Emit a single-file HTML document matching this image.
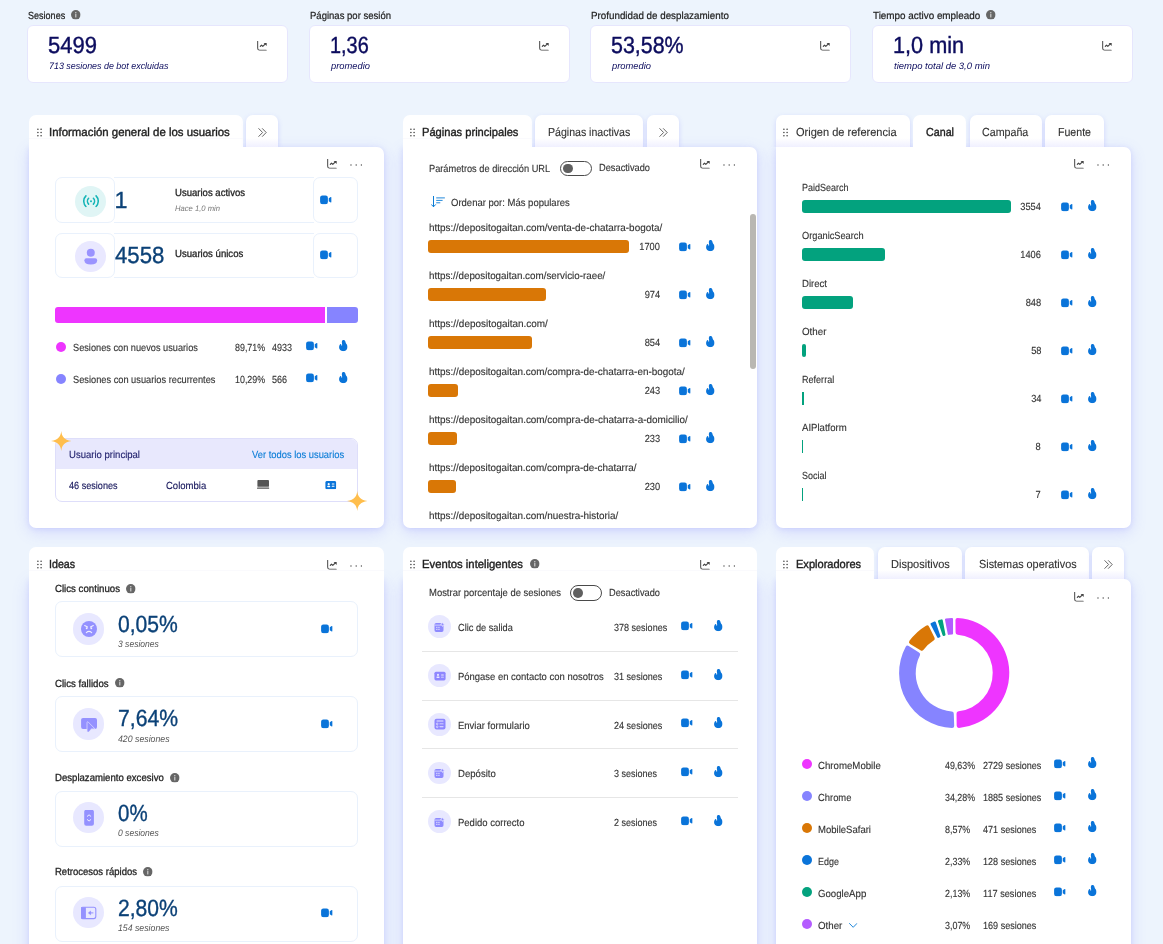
<!DOCTYPE html>
<html><head><meta charset="utf-8"><title>Dashboard</title>
<style>
html,body{margin:0;padding:0}
body{width:1163px;height:944px;overflow:hidden;background:#edf4fd;font-family:"Liberation Sans",sans-serif;position:relative}
#r{position:absolute;left:0;top:0;width:1163px;height:944px;overflow:hidden;will-change:transform}
.t{position:absolute;white-space:nowrap;text-rendering:geometricPrecision}
.b{position:absolute}
.i{position:absolute;overflow:visible}
</style></head><body>

<svg width="0" height="0" style="position:absolute"><defs>
<symbol id="cam" viewBox="0 0 11.6 9.6"><rect x="0.1" y="0.4" width="7.8" height="8.8" rx="2.3" fill="#0a74d9"/><path d="M8.75,3.3 L10.7,2.1 Q11.6,1.7 11.6,2.8 V6.8 Q11.6,7.9 10.7,7.5 L8.75,6.3 Z" fill="#0a74d9"/></symbol>
<symbol id="flame" viewBox="0 0 8.6 11.2"><path d="M4.7,0 C5.7,0.1 6.3,0.9 6.5,1.9 C6.8,3.2 7.6,3.9 8.1,5.0 C8.8,6.5 8.7,8.3 7.7,9.6 C6.9,10.6 5.8,11.2 4.4,11.2 C2.9,11.2 1.6,10.6 0.8,9.5 C-0.1,8.2 -0.1,6.6 0.5,5.3 C0.8,4.6 1.1,4.2 1.5,4.0 C1.9,3.8 2.2,4.1 2.25,4.6 C2.3,5.1 2.5,5.6 2.9,5.9 C3.3,5.0 3.1,3.8 2.9,2.9 C2.7,1.6 3.2,0.5 4.0,0.1 C4.2,0 4.5,0 4.7,0 Z" fill="#0a74d9"/></symbol>
<symbol id="chart" viewBox="0 0 10.4 9.8"><path d="M0.65,0.2 V7.3 A1.9,1.9 0 0 0 2.55,9.2 H9.2" fill="none" stroke="#555" stroke-width="1.1" stroke-linecap="round"/><path d="M3.3,5.3 L4.4,4.2 L5.8,5.3 L8.4,2.8" fill="none" stroke="#444" stroke-width="1.15" stroke-linecap="round" stroke-linejoin="round"/><path d="M6.6,1.9 H9.7 V5.0 Z" fill="#444"/></symbol>
<symbol id="dots" viewBox="0 0 12.4 2"><circle cx="1" cy="1" r="0.72" fill="#555"/><circle cx="6.2" cy="1" r="0.72" fill="#555"/><circle cx="11.4" cy="1" r="0.72" fill="#555"/></symbol>
<symbol id="grip" viewBox="0 0 5 9"><g fill="#444"><circle cx="0.9" cy="1.2" r="0.8"/><circle cx="4.1" cy="1.2" r="0.8"/><circle cx="0.9" cy="4.5" r="0.8"/><circle cx="4.1" cy="4.5" r="0.8"/><circle cx="0.9" cy="7.8" r="0.8"/><circle cx="4.1" cy="7.8" r="0.8"/></g></symbol>
<symbol id="info" viewBox="0 0 9.6 9.6"><circle cx="4.8" cy="4.8" r="4.8" fill="#666"/><rect x="4.25" y="4.1" width="1.1" height="3.3" rx="0.5" fill="#d8d8d8"/><circle cx="4.8" cy="2.7" r="0.7" fill="#d8d8d8"/></symbol>
<symbol id="chev2" viewBox="0 0 9 9"><path d="M0.8,0.6 L4.6,4.5 L0.8,8.4 M4.4,0.6 L8.2,4.5 L4.4,8.4" fill="none" stroke="#555" stroke-width="0.9" stroke-linecap="round" stroke-linejoin="round"/></symbol>
<symbol id="sort" viewBox="0 0 14 11.4"><path d="M2.5,0.3 V10.6 M0.5,8.7 L2.5,10.8 L4.5,8.7" fill="none" stroke="#0a7cd6" stroke-width="1" stroke-linecap="round" stroke-linejoin="round"/><path d="M5.6,1.9 H13.5 M5.6,4.4 H11.2 M5.6,6.8 H8.9" fill="none" stroke="#0a7cd6" stroke-width="0.9" stroke-linecap="round"/></symbol>
<symbol id="live" viewBox="0 0 16 12.4"><g fill="none" stroke="#16b5b7" stroke-width="1.55" stroke-linecap="round"><path d="M2.9,0.9 A7.6,7.6 0 0 0 2.9,11.5"/><path d="M13.1,0.9 A7.6,7.6 0 0 1 13.1,11.5"/><path d="M5.6,3.3 A4.2,4.2 0 0 0 5.6,9.1"/><path d="M10.4,3.3 A4.2,4.2 0 0 1 10.4,9.1"/></g><circle cx="8" cy="6.2" r="1" fill="#16b5b7"/></symbol>
<symbol id="person" viewBox="0 0 13.6 17"><circle cx="6.8" cy="4.7" r="4" fill="#9a93ff"/><path d="M2.4,10.3 H11.2 Q13.2,10.3 13.2,12.2 Q13.2,16.6 6.8,16.6 Q0.4,16.6 0.4,12.2 Q0.4,10.3 2.4,10.3 Z" fill="#9a93ff"/></symbol>
<symbol id="laptop" viewBox="0 0 12.4 9"><rect x="0.4" y="0" width="11.6" height="6.8" rx="0.9" fill="#555"/><rect x="0" y="7.6" width="12.4" height="1.2" rx="0.6" fill="#555"/></symbol>
<symbol id="idcard" viewBox="0 0 10.8 8"><rect x="0" y="0" width="10.8" height="8" rx="1.5" fill="#0a74d9"/><circle cx="3.4" cy="3.1" r="1.05" fill="#fff"/><rect x="1.9" y="4.7" width="3" height="1.3" rx="0.6" fill="#fff"/><rect x="6.3" y="2.5" width="2.8" height="0.9" rx="0.4" fill="#fff"/><rect x="6.3" y="4.6" width="2.8" height="0.9" rx="0.4" fill="#fff"/></symbol>
<symbol id="spark" viewBox="0 0 20 20"><path d="M10,0 C10.6,5.6 12.6,8.6 20,10 C12.6,11.4 10.6,14.4 10,20 C9.4,14.4 7.4,11.4 0,10 C7.4,8.6 9.4,5.6 10,0 Z" fill="#ffbe4d"/></symbol>
<symbol id="chevd" viewBox="0 0 8.4 5"><path d="M0.5,0.5 L4.2,4.3 L7.9,0.5" fill="none" stroke="#0a7cd6" stroke-width="0.9" stroke-linecap="round" stroke-linejoin="round"/></symbol>
<symbol id="angry" viewBox="0 0 16 16"><circle cx="8" cy="8" r="8" fill="#9491ff"/><g fill="none" stroke="#efeeff" stroke-width="1.1" stroke-linecap="round"><path d="M3.7,4.6 L6.5,6.1 M12.3,4.6 L9.5,6.1"/><path d="M5.3,11.6 Q8,9.2 10.7,11.6"/></g><circle cx="5.7" cy="7.3" r="0.95" fill="#efeeff"/><circle cx="10.3" cy="7.3" r="0.95" fill="#efeeff"/></symbol>
<symbol id="dead" viewBox="0 0 16 16"><rect x="0.1" y="1.9" width="15.9" height="11.1" rx="1.9" fill="#9491ff"/><path d="M6.0,6.6 Q6.0,5.2 7.2,6.0 L14.0,12.9 H10.2 L8.1,15.6 Q7.2,16.3 6.0,15.6 Z" fill="#9491ff" stroke="#d9d7ff" stroke-width="0.8" stroke-linejoin="round"/><rect x="5.4" y="13.1" width="4.2" height="3.4" fill="#e8e8ff"/><path d="M6.4,13.0 H9.9 L8.0,15.5 Q7.2,16.1 6.4,15.5 Z" fill="#9491ff"/></symbol>
<symbol id="scroll" viewBox="0 0 16 16"><rect x="3.2" y="-0.2" width="9.7" height="16" rx="2" fill="#9491ff"/><path d="M6.3,6.3 L8.05,4.8 L9.8,6.3 M6.3,9.6 L8.05,11.1 L9.8,9.6" fill="none" stroke="#efeeff" stroke-width="1" stroke-linecap="round" stroke-linejoin="round"/></symbol>
<symbol id="back" viewBox="0 0 16 16"><rect x="-0.2" y="2.2" width="15.0" height="11.4" rx="2" fill="#e8e8ff" stroke="#9491ff" stroke-width="1.1"/><path d="M1.8,2.2 H4.9 V13.6 H1.8 Q-0.2,13.6 -0.2,11.6 V4.2 Q-0.2,2.2 1.8,2.2 Z" fill="#9491ff"/><path d="M12.0,7.9 H9.0" fill="none" stroke="#9491ff" stroke-width="1" stroke-linecap="round"/><path d="M9.6,6.0 L7.3,7.9 L9.6,9.8 Z" fill="#8f8bff" stroke="#8f8bff" stroke-width="0.5" stroke-linejoin="round"/></symbol>
<symbol id="evcal" viewBox="0 0 12 12"><path d="M2.2,1.9 H7.2 Q7.7,3.7 9.5,4.2 V9.2 Q9.5,10.9 7.8,10.9 H2.2 Q0.5,10.9 0.5,9.2 V3.6 Q0.5,1.9 2.2,1.9 Z" fill="#8e8aff"/><rect x="0.5" y="3.7" width="9" height="0.75" fill="#e8e8ff"/><g fill="#efeeff"><rect x="2.3" y="5.8" width="1.1" height="1.1"/><rect x="4.4" y="5.8" width="1.1" height="1.1"/><rect x="2.3" y="7.8" width="1.1" height="1.1"/><rect x="4.4" y="7.8" width="1.1" height="1.1"/></g><path d="M8.6,0.9 C8.8,2.5 9.3,3.0 10.9,3.3 C9.3,3.6 8.8,4.1 8.6,5.7 C8.4,4.1 7.9,3.6 6.3,3.3 C7.9,3.0 8.4,2.5 8.6,0.9 Z" fill="#8e8aff" stroke="#e8e8ff" stroke-width="0.5"/></symbol>
<symbol id="evcard" viewBox="0 0 12 12"><rect x="0.4" y="1.7" width="11.2" height="8.7" rx="1.6" fill="#8e86ff"/><circle cx="4" cy="4.9" r="1.05" fill="#e9e8ff"/><rect x="2.4" y="6.6" width="3.2" height="1.4" rx="0.7" fill="#e9e8ff"/><rect x="7" y="4.5" width="2.9" height="0.9" rx="0.4" fill="#e9e8ff"/><rect x="7" y="6.7" width="2.9" height="0.9" rx="0.4" fill="#e9e8ff"/></symbol>
<symbol id="evform" viewBox="0 0 12 12"><rect x="0.5" y="0.7" width="11" height="10.8" rx="2" fill="#8e86ff"/><rect x="2.4" y="2.5" width="7.2" height="0.9" rx="0.4" fill="#e9e8ff"/><circle cx="3.2" cy="5.9" r="0.85" fill="none" stroke="#e9e8ff" stroke-width="0.7"/><circle cx="3.2" cy="8.8" r="0.85" fill="none" stroke="#e9e8ff" stroke-width="0.7"/><rect x="5.4" y="5.45" width="4.2" height="0.9" rx="0.4" fill="#e9e8ff"/><rect x="5.4" y="8.35" width="4.2" height="0.9" rx="0.4" fill="#e9e8ff"/></symbol>
</defs></svg>
<div id="r">
<div class="b" style="left:27.00px;top:25.00px;width:261.00px;height:58.00px;background:#fff;border:1px solid #e6e6fd;border-radius:6px;box-sizing:border-box;"></div>
<div class="t" style="font-size:10.30px;line-height:11px;height:11px;top:11px;color:#1c1c1c;-webkit-text-stroke:0.20px #1c1c1c;left:27.60px;transform-origin:0 50%;transform:scaleX(0.8779);">Sesiones</div>
<svg class="i" style="left:71.20px;top:10.20px" width="9.60" height="9.60" viewBox="0 0 9.6 9.6"><use href="#info"/></svg>
<div class="t" style="font-size:23.40px;line-height:26px;height:26px;top:32px;color:#0c0c5e;-webkit-text-stroke:0.40px #0c0c5e;left:48.30px;transform-origin:0 50%;transform:scaleX(0.9413);">5499</div>
<div class="t" style="font-size:9.40px;line-height:11px;height:11px;top:60px;color:#0c0c5e;font-style:italic;left:48.50px;transform-origin:0 50%;transform:scaleX(0.9504);">713 sesiones de bot excluidas</div>
<svg class="i" style="left:257.00px;top:41.10px" width="10.40" height="9.80" viewBox="0 0 10.4 9.8"><use href="#chart"/></svg>
<div class="b" style="left:309.00px;top:25.00px;width:261.00px;height:58.00px;background:#fff;border:1px solid #e6e6fd;border-radius:6px;box-sizing:border-box;"></div>
<div class="t" style="font-size:10.30px;line-height:11px;height:11px;top:11px;color:#1c1c1c;-webkit-text-stroke:0.20px #1c1c1c;left:309.60px;transform-origin:0 50%;transform:scaleX(0.9246);">Páginas por sesión</div>
<div class="t" style="font-size:23.40px;line-height:26px;height:26px;top:32px;color:#0c0c5e;-webkit-text-stroke:0.40px #0c0c5e;left:330.30px;transform-origin:0 50%;transform:scaleX(0.8497);">1,36</div>
<div class="t" style="font-size:9.40px;line-height:11px;height:11px;top:60px;color:#0c0c5e;font-style:italic;left:330.50px;transform-origin:0 50%;transform:scaleX(0.9977);">promedio</div>
<svg class="i" style="left:539.00px;top:41.10px" width="10.40" height="9.80" viewBox="0 0 10.4 9.8"><use href="#chart"/></svg>
<div class="b" style="left:590.00px;top:25.00px;width:261.00px;height:58.00px;background:#fff;border:1px solid #e6e6fd;border-radius:6px;box-sizing:border-box;"></div>
<div class="t" style="font-size:10.30px;line-height:11px;height:11px;top:11px;color:#1c1c1c;-webkit-text-stroke:0.20px #1c1c1c;left:590.60px;transform-origin:0 50%;transform:scaleX(0.9518);">Profundidad de desplazamiento</div>
<div class="t" style="font-size:23.40px;line-height:26px;height:26px;top:32px;color:#0c0c5e;-webkit-text-stroke:0.40px #0c0c5e;left:611.30px;transform-origin:0 50%;transform:scaleX(0.9160);">53,58%</div>
<div class="t" style="font-size:9.40px;line-height:11px;height:11px;top:60px;color:#0c0c5e;font-style:italic;left:611.50px;transform-origin:0 50%;transform:scaleX(0.9977);">promedio</div>
<svg class="i" style="left:820.00px;top:41.10px" width="10.40" height="9.80" viewBox="0 0 10.4 9.8"><use href="#chart"/></svg>
<div class="b" style="left:872.00px;top:25.00px;width:261.00px;height:58.00px;background:#fff;border:1px solid #e6e6fd;border-radius:6px;box-sizing:border-box;"></div>
<div class="t" style="font-size:10.30px;line-height:11px;height:11px;top:11px;color:#1c1c1c;-webkit-text-stroke:0.20px #1c1c1c;left:872.60px;transform-origin:0 50%;transform:scaleX(0.9595);">Tiempo activo empleado</div>
<svg class="i" style="left:986.30px;top:10.20px" width="9.60" height="9.60" viewBox="0 0 9.6 9.6"><use href="#info"/></svg>
<div class="t" style="font-size:23.40px;line-height:26px;height:26px;top:32px;color:#0c0c5e;-webkit-text-stroke:0.40px #0c0c5e;left:893.30px;transform-origin:0 50%;transform:scaleX(0.9278);">1,0 min</div>
<div class="t" style="font-size:9.40px;line-height:11px;height:11px;top:60px;color:#0c0c5e;font-style:italic;left:893.50px;transform-origin:0 50%;transform:scaleX(1.0116);">tiempo total de 3,0 min</div>
<svg class="i" style="left:1102.00px;top:41.10px" width="10.40" height="9.80" viewBox="0 0 10.4 9.8"><use href="#chart"/></svg>
<div class="b" style="left:29.00px;top:147.00px;width:355.00px;height:380.60px;background:#fff;border-radius:0 7px 7px 7px;box-shadow:0 1px 5px rgba(110,110,255,0.17),0 4px 16px rgba(110,110,255,0.20);"></div>
<div class="b" style="left:403.00px;top:147.00px;width:353.80px;height:380.60px;background:#fff;border-radius:0 7px 7px 7px;box-shadow:0 1px 5px rgba(110,110,255,0.17),0 4px 16px rgba(110,110,255,0.20);"></div>
<div class="b" style="left:776.00px;top:147.00px;width:355.00px;height:380.60px;background:#fff;border-radius:0 7px 7px 7px;box-shadow:0 1px 5px rgba(110,110,255,0.17),0 4px 16px rgba(110,110,255,0.20);"></div>
<div class="b" style="left:29.00px;top:579.00px;width:355.00px;height:381.00px;background:#fff;border-radius:0;box-shadow:0 1px 5px rgba(110,110,255,0.17),0 4px 16px rgba(110,110,255,0.20);"></div>
<div class="b" style="left:403.00px;top:579.00px;width:353.80px;height:381.00px;background:#fff;border-radius:0;box-shadow:0 1px 5px rgba(110,110,255,0.17),0 4px 16px rgba(110,110,255,0.20);"></div>
<div class="b" style="left:776.00px;top:579.00px;width:355.00px;height:381.00px;background:#fff;border-radius:0 7px 0 0;box-shadow:0 1px 5px rgba(110,110,255,0.17),0 4px 16px rgba(110,110,255,0.20);"></div>
<div class="b" style="left:29.00px;top:115.00px;width:214.00px;height:34.00px;background:#fff;border-radius:7px 7px 0 0;"></div>
<div class="b" style="left:246.00px;top:115.00px;width:32.00px;height:32.00px;background:linear-gradient(#fff 72%,#f0f0ff);border-radius:7px 7px 0 0;box-shadow:0 2px 5px rgba(120,120,255,0.25);clip-path:inset(-8px -8px 0 -8px);"></div>
<div class="b" style="left:403.00px;top:115.00px;width:128.60px;height:34.00px;background:#fff;border-radius:7px 7px 0 0;"></div>
<div class="b" style="left:535.30px;top:115.00px;width:107.70px;height:32.00px;background:linear-gradient(#fff 72%,#f0f0ff);border-radius:7px 7px 0 0;box-shadow:0 2px 5px rgba(120,120,255,0.25);clip-path:inset(-8px -8px 0 -8px);"></div>
<div class="b" style="left:647.00px;top:115.00px;width:32.00px;height:32.00px;background:linear-gradient(#fff 72%,#f0f0ff);border-radius:7px 7px 0 0;box-shadow:0 2px 5px rgba(120,120,255,0.25);clip-path:inset(-8px -8px 0 -8px);"></div>
<div class="b" style="left:776.00px;top:115.00px;width:133.60px;height:32.00px;background:linear-gradient(#fff 72%,#f0f0ff);border-radius:7px 7px 0 0;box-shadow:0 2px 5px rgba(120,120,255,0.25);clip-path:inset(-8px -8px 0 -8px);"></div>
<div class="b" style="left:913.30px;top:115.00px;width:52.70px;height:34.00px;background:#fff;border-radius:7px 7px 0 0;"></div>
<div class="b" style="left:970.00px;top:115.00px;width:72.00px;height:32.00px;background:linear-gradient(#fff 72%,#f0f0ff);border-radius:7px 7px 0 0;box-shadow:0 2px 5px rgba(120,120,255,0.25);clip-path:inset(-8px -8px 0 -8px);"></div>
<div class="b" style="left:1045.40px;top:115.00px;width:58.60px;height:32.00px;background:linear-gradient(#fff 72%,#f0f0ff);border-radius:7px 7px 0 0;box-shadow:0 2px 5px rgba(120,120,255,0.25);clip-path:inset(-8px -8px 0 -8px);"></div>
<div class="b" style="left:29.00px;top:546.90px;width:355.00px;height:34.10px;background:#fff;border-radius:7px 7px 0 0;"></div>
<div class="b" style="left:403.00px;top:546.90px;width:353.80px;height:34.10px;background:#fff;border-radius:7px 7px 0 0;"></div>
<div class="b" style="left:776.00px;top:546.90px;width:97.80px;height:34.10px;background:#fff;border-radius:7px 7px 0 0;"></div>
<div class="b" style="left:878.00px;top:546.90px;width:84.00px;height:32.10px;background:linear-gradient(#fff 72%,#f0f0ff);border-radius:7px 7px 0 0;box-shadow:0 2px 5px rgba(120,120,255,0.25);clip-path:inset(-8px -8px 0 -8px);"></div>
<div class="b" style="left:965.30px;top:546.90px;width:123.40px;height:32.10px;background:linear-gradient(#fff 72%,#f0f0ff);border-radius:7px 7px 0 0;box-shadow:0 2px 5px rgba(120,120,255,0.25);clip-path:inset(-8px -8px 0 -8px);"></div>
<div class="b" style="left:1092.40px;top:546.90px;width:31.40px;height:32.10px;background:linear-gradient(#fff 72%,#f0f0ff);border-radius:7px 7px 0 0;box-shadow:0 2px 5px rgba(120,120,255,0.25);clip-path:inset(-8px -8px 0 -8px);"></div>
<div class="b" style="left:29.00px;top:138.00px;width:214.00px;height:1.00px;background:#fafafd;"></div>
<div class="b" style="left:403.00px;top:138.00px;width:128.60px;height:1.00px;background:#fafafd;"></div>
<div class="b" style="left:29.00px;top:570.00px;width:355.00px;height:1.00px;background:#fafafd;"></div>
<div class="b" style="left:403.00px;top:570.00px;width:353.80px;height:1.00px;background:#fafafd;"></div>
<div class="b" style="left:776.00px;top:570.00px;width:97.80px;height:1.00px;background:#fafafd;"></div>
<svg class="i" style="left:36.50px;top:127.60px" width="5.00" height="9.00" viewBox="0 0 5 9"><use href="#grip"/></svg>
<div class="t" style="font-size:11.70px;line-height:13px;height:13px;top:126px;color:#1f1f1f;-webkit-text-stroke:0.40px #1f1f1f;left:48.80px;transform-origin:0 50%;transform:scaleX(0.9765);">Información general de los usuarios</div>
<svg class="i" style="left:257.50px;top:127.80px" width="9.00" height="9.00" viewBox="0 0 9 9"><use href="#chev2"/></svg>
<svg class="i" style="left:410.10px;top:127.60px" width="5.00" height="9.00" viewBox="0 0 5 9"><use href="#grip"/></svg>
<div class="t" style="font-size:11.70px;line-height:13px;height:13px;top:126px;color:#1f1f1f;-webkit-text-stroke:0.40px #1f1f1f;left:422.00px;transform-origin:0 50%;transform:scaleX(0.9511);">Páginas principales</div>
<div class="t" style="font-size:11.70px;line-height:13px;height:13px;top:126px;color:#333;-webkit-text-stroke:0.13px #333;left:548.00px;transform-origin:0 50%;transform:scaleX(0.9039);">Páginas inactivas</div>
<svg class="i" style="left:658.50px;top:127.80px" width="9.00" height="9.00" viewBox="0 0 9 9"><use href="#chev2"/></svg>
<svg class="i" style="left:783.10px;top:127.60px" width="5.00" height="9.00" viewBox="0 0 5 9"><use href="#grip"/></svg>
<div class="t" style="font-size:11.70px;line-height:13px;height:13px;top:126px;color:#333;-webkit-text-stroke:0.13px #333;left:795.70px;transform-origin:0 50%;transform:scaleX(0.9441);">Origen de referencia</div>
<div class="t" style="font-size:11.70px;line-height:13px;height:13px;top:126px;color:#1f1f1f;-webkit-text-stroke:0.40px #1f1f1f;left:925.50px;transform-origin:0 50%;transform:scaleX(0.9159);">Canal</div>
<div class="t" style="font-size:11.70px;line-height:13px;height:13px;top:126px;color:#333;-webkit-text-stroke:0.13px #333;left:982.20px;transform-origin:0 50%;transform:scaleX(0.9126);">Campaña</div>
<div class="t" style="font-size:11.70px;line-height:13px;height:13px;top:126px;color:#333;-webkit-text-stroke:0.13px #333;left:1058.00px;transform-origin:0 50%;transform:scaleX(0.9059);">Fuente</div>
<svg class="i" style="left:36.50px;top:559.80px" width="5.00" height="9.00" viewBox="0 0 5 9"><use href="#grip"/></svg>
<div class="t" style="font-size:11.70px;line-height:13px;height:13px;top:558px;color:#1f1f1f;-webkit-text-stroke:0.40px #1f1f1f;left:48.80px;transform-origin:0 50%;transform:scaleX(0.9119);">Ideas</div>
<svg class="i" style="left:410.10px;top:559.80px" width="5.00" height="9.00" viewBox="0 0 5 9"><use href="#grip"/></svg>
<div class="t" style="font-size:11.70px;line-height:13px;height:13px;top:558px;color:#1f1f1f;-webkit-text-stroke:0.40px #1f1f1f;left:422.00px;transform-origin:0 50%;transform:scaleX(0.9645);">Eventos inteligentes</div>
<svg class="i" style="left:530.10px;top:559.20px" width="9.60" height="9.60" viewBox="0 0 9.6 9.6"><use href="#info"/></svg>
<svg class="i" style="left:783.10px;top:559.80px" width="5.00" height="9.00" viewBox="0 0 5 9"><use href="#grip"/></svg>
<div class="t" style="font-size:11.70px;line-height:13px;height:13px;top:558px;color:#1f1f1f;-webkit-text-stroke:0.40px #1f1f1f;left:796.00px;transform-origin:0 50%;transform:scaleX(0.9457);">Exploradores</div>
<div class="t" style="font-size:11.70px;line-height:13px;height:13px;top:558px;color:#333;-webkit-text-stroke:0.13px #333;left:890.60px;transform-origin:0 50%;transform:scaleX(0.9436);">Dispositivos</div>
<div class="t" style="font-size:11.70px;line-height:13px;height:13px;top:558px;color:#333;-webkit-text-stroke:0.13px #333;left:978.50px;transform-origin:0 50%;transform:scaleX(0.9274);">Sistemas operativos</div>
<svg class="i" style="left:1103.50px;top:560.10px" width="9.00" height="9.00" viewBox="0 0 9 9"><use href="#chev2"/></svg>
<svg class="i" style="left:327.20px;top:159.30px" width="10.40" height="9.80" viewBox="0 0 10.4 9.8"><use href="#chart"/></svg>
<svg class="i" style="left:349.90px;top:164.20px" width="12.40" height="2.00" viewBox="0 0 12.4 2"><use href="#dots"/></svg>
<svg class="i" style="left:700.20px;top:159.30px" width="10.40" height="9.80" viewBox="0 0 10.4 9.8"><use href="#chart"/></svg>
<svg class="i" style="left:722.90px;top:164.20px" width="12.40" height="2.00" viewBox="0 0 12.4 2"><use href="#dots"/></svg>
<svg class="i" style="left:1074.00px;top:159.30px" width="10.40" height="9.80" viewBox="0 0 10.4 9.8"><use href="#chart"/></svg>
<svg class="i" style="left:1096.70px;top:164.20px" width="12.40" height="2.00" viewBox="0 0 12.4 2"><use href="#dots"/></svg>
<svg class="i" style="left:327.20px;top:560.00px" width="10.40" height="9.80" viewBox="0 0 10.4 9.8"><use href="#chart"/></svg>
<svg class="i" style="left:349.90px;top:565.00px" width="12.40" height="2.00" viewBox="0 0 12.4 2"><use href="#dots"/></svg>
<svg class="i" style="left:700.20px;top:560.00px" width="10.40" height="9.80" viewBox="0 0 10.4 9.8"><use href="#chart"/></svg>
<svg class="i" style="left:722.90px;top:565.00px" width="12.40" height="2.00" viewBox="0 0 12.4 2"><use href="#dots"/></svg>
<svg class="i" style="left:1074.00px;top:591.50px" width="10.40" height="9.80" viewBox="0 0 10.4 9.8"><use href="#chart"/></svg>
<svg class="i" style="left:1096.70px;top:596.60px" width="12.40" height="2.00" viewBox="0 0 12.4 2"><use href="#dots"/></svg>
<div class="b" style="left:55.20px;top:177.00px;width:60.00px;height:46.00px;border:1px solid #e9f1fc;box-sizing:border-box;border-radius:7px;"></div>
<div class="b" style="left:114.20px;top:177.00px;width:199.80px;height:46.00px;border-top:1px solid #e9f1fc;border-bottom:1px solid #e9f1fc;box-sizing:border-box;"></div>
<div class="b" style="left:313.00px;top:177.00px;width:44.60px;height:46.00px;border:1px solid #e9f1fc;box-sizing:border-box;border-radius:7px;"></div>
<div class="b" style="left:55.20px;top:233.00px;width:60.00px;height:45.00px;border:1px solid #e9f1fc;box-sizing:border-box;border-radius:7px;"></div>
<div class="b" style="left:114.20px;top:233.00px;width:199.80px;height:45.00px;border-top:1px solid #e9f1fc;border-bottom:1px solid #e9f1fc;box-sizing:border-box;"></div>
<div class="b" style="left:313.00px;top:233.00px;width:44.60px;height:45.00px;border:1px solid #e9f1fc;box-sizing:border-box;border-radius:7px;"></div>
<div class="b" style="left:75.10px;top:185.60px;width:31.00px;height:31.00px;background:#e0f5f5;border-radius:50%;"></div>
<svg class="i" style="left:82.60px;top:195.20px" width="16.00" height="12.40" viewBox="0 0 16 12.4"><use href="#live"/></svg>
<div class="b" style="left:75.10px;top:240.60px;width:31.00px;height:31.00px;background:#e9e8ff;border-radius:50%;"></div>
<svg class="i" style="left:84.20px;top:247.60px" width="13.60" height="17.00" viewBox="0 0 13.6 17"><use href="#person"/></svg>
<div class="t" style="font-size:23.40px;line-height:26px;height:26px;top:187px;color:#0b4177;-webkit-text-stroke:0.35px #0b4177;left:114.60px;transform-origin:0 50%;transform:scaleX(1.0000);">1</div>
<div class="t" style="font-size:23.40px;line-height:26px;height:26px;top:242px;color:#0b4177;-webkit-text-stroke:0.35px #0b4177;left:115.00px;transform-origin:0 50%;transform:scaleX(0.9489);">4558</div>
<div class="t" style="font-size:10.30px;line-height:11px;height:11px;top:188px;color:#1f1f1f;-webkit-text-stroke:0.30px #1f1f1f;left:174.90px;transform-origin:0 50%;transform:scaleX(0.9277);">Usuarios activos</div>
<div class="t" style="font-size:7.90px;line-height:9px;height:9px;top:204px;color:#777;font-style:italic;left:174.90px;transform-origin:0 50%;transform:scaleX(0.9690);">Hace 1,0 min</div>
<div class="t" style="font-size:10.30px;line-height:11px;height:11px;top:249px;color:#1f1f1f;-webkit-text-stroke:0.30px #1f1f1f;left:174.90px;transform-origin:0 50%;transform:scaleX(0.9321);">Usuarios únicos</div>
<svg class="i" style="left:320.40px;top:195.00px" width="11.60" height="9.60" viewBox="0 0 11.6 9.6"><use href="#cam"/></svg>
<svg class="i" style="left:320.40px;top:250.20px" width="11.60" height="9.60" viewBox="0 0 11.6 9.6"><use href="#cam"/></svg>
<div class="b" style="left:55.30px;top:307.00px;width:269.70px;height:15.80px;background:#ee35ff;border-radius:3px 0 0 3px;"></div>
<div class="b" style="left:327.00px;top:307.00px;width:30.60px;height:15.80px;background:#8684ff;border-radius:0 3px 3px 0;"></div>
<div class="b" style="left:55.80px;top:342.00px;width:10.00px;height:10.00px;background:#ee35ff;border-radius:50%;"></div>
<div class="t" style="font-size:10.30px;line-height:11px;height:11px;top:343px;color:#333;-webkit-text-stroke:0.13px #333;left:72.90px;transform-origin:0 50%;transform:scaleX(0.8940);">Sesiones con nuevos usuarios</div>
<div class="t" style="font-size:10.30px;line-height:11px;height:11px;top:343px;color:#333;-webkit-text-stroke:0.13px #333;left:235.00px;transform-origin:0 50%;transform:scaleX(0.8645);">89,71%</div>
<div class="t" style="font-size:10.30px;line-height:11px;height:11px;top:343px;color:#333;-webkit-text-stroke:0.13px #333;left:272.00px;transform-origin:0 50%;transform:scaleX(0.8728);">4933</div>
<svg class="i" style="left:306.20px;top:340.90px" width="11.60" height="9.60" viewBox="0 0 11.6 9.6"><use href="#cam"/></svg>
<svg class="i" style="left:338.80px;top:339.95px" width="8.60" height="11.20" viewBox="0 0 8.6 11.2"><use href="#flame"/></svg>
<div class="b" style="left:55.80px;top:374.00px;width:10.00px;height:10.00px;background:#8684ff;border-radius:50%;"></div>
<div class="t" style="font-size:10.30px;line-height:11px;height:11px;top:375px;color:#333;-webkit-text-stroke:0.13px #333;left:72.90px;transform-origin:0 50%;transform:scaleX(0.8985);">Sesiones con usuarios recurrentes</div>
<div class="t" style="font-size:10.30px;line-height:11px;height:11px;top:375px;color:#333;-webkit-text-stroke:0.13px #333;left:235.00px;transform-origin:0 50%;transform:scaleX(0.8645);">10,29%</div>
<div class="t" style="font-size:10.30px;line-height:11px;height:11px;top:375px;color:#333;-webkit-text-stroke:0.13px #333;left:272.00px;transform-origin:0 50%;transform:scaleX(0.8728);">566</div>
<svg class="i" style="left:306.20px;top:372.90px" width="11.60" height="9.60" viewBox="0 0 11.6 9.6"><use href="#cam"/></svg>
<svg class="i" style="left:338.80px;top:371.95px" width="8.60" height="11.20" viewBox="0 0 8.6 11.2"><use href="#flame"/></svg>
<div class="b" style="left:55.30px;top:438.10px;width:302.30px;height:63.50px;border:1px solid #dedefa;box-sizing:border-box;border-radius:7px;background:#fff;overflow:hidden;"></div>
<div class="b" style="left:56.30px;top:439.10px;width:300.30px;height:29.80px;background:#e8e8fd;border-radius:6px 6px 0 0;"></div>
<div class="t" style="font-size:10.30px;line-height:11px;height:11px;top:450px;color:#22226e;-webkit-text-stroke:0.13px #22226e;left:68.60px;transform-origin:0 50%;transform:scaleX(0.9255);">Usuario principal</div>
<div class="t" style="font-size:10.30px;line-height:11px;height:11px;top:450px;color:#0a7cd6;-webkit-text-stroke:0.13px #0a7cd6;left:251.70px;transform-origin:0 50%;transform:scaleX(0.9098);">Ver todos los usuarios</div>
<div class="t" style="font-size:10.30px;line-height:11px;height:11px;top:481px;color:#14145a;-webkit-text-stroke:0.13px #14145a;left:68.60px;transform-origin:0 50%;transform:scaleX(0.8841);">46 sesiones</div>
<div class="t" style="font-size:10.30px;line-height:11px;height:11px;top:481px;color:#14145a;-webkit-text-stroke:0.13px #14145a;left:166.40px;transform-origin:0 50%;transform:scaleX(0.9239);">Colombia</div>
<svg class="i" style="left:257.00px;top:480.00px" width="12.40" height="9.00" viewBox="0 0 12.4 9"><use href="#laptop"/></svg>
<svg class="i" style="left:325.00px;top:480.90px" width="11.50" height="8.20" viewBox="0 0 10.8 8"><use href="#idcard"/></svg>
<svg class="i" style="left:50.80px;top:431.00px" width="20.50" height="20.00" viewBox="0 0 20 20" preserveAspectRatio="none"><use href="#spark"/></svg>
<svg class="i" style="left:346.80px;top:490.90px" width="20.50" height="20.00" viewBox="0 0 20 20" preserveAspectRatio="none"><use href="#spark"/></svg>
<div class="t" style="font-size:10.30px;line-height:11px;height:11px;top:164px;color:#333;-webkit-text-stroke:0.13px #333;left:428.70px;transform-origin:0 50%;transform:scaleX(0.8971);">Parámetros de dirección URL</div>
<div class="b" style="left:559.90px;top:160.80px;width:32.00px;height:15.70px;border:1px solid #4a4a4a;box-sizing:border-box;border-radius:8px;background:#fff;"></div>
<div class="b" style="left:563.20px;top:163.70px;width:9.80px;height:9.80px;background:#606060;border-radius:50%;"></div>
<div class="t" style="font-size:10.30px;line-height:11px;height:11px;top:163px;color:#333;-webkit-text-stroke:0.13px #333;left:598.60px;transform-origin:0 50%;transform:scaleX(0.8998);">Desactivado</div>
<svg class="i" style="left:431.00px;top:195.60px" width="14.00" height="11.40" viewBox="0 0 14 11.4"><use href="#sort"/></svg>
<div class="t" style="font-size:10.30px;line-height:11px;height:11px;top:198px;color:#333;-webkit-text-stroke:0.13px #333;left:450.90px;transform-origin:0 50%;transform:scaleX(0.9230);">Ordenar por: Más populares</div>
<div class="t" style="font-size:10.30px;line-height:11px;height:11px;top:223px;color:#333;-webkit-text-stroke:0.13px #333;left:428.70px;transform-origin:0 50%;transform:scaleX(0.9632);">https://depositogaitan.com/venta-de-chatarra-bogota/</div>
<div class="b" style="left:428.00px;top:240.00px;width:201.00px;height:12.90px;background:#d97706;border-radius:3px;"></div>
<div class="t" style="font-size:10.30px;line-height:11px;height:11px;top:242px;color:#333;-webkit-text-stroke:0.13px #333;right:503.20px;text-align:right;transform-origin:100% 50%;transform:scaleX(0.9000);">1700</div>
<svg class="i" style="left:679.30px;top:241.80px" width="11.60" height="9.60" viewBox="0 0 11.6 9.6"><use href="#cam"/></svg>
<svg class="i" style="left:706.00px;top:239.95px" width="8.60" height="11.20" viewBox="0 0 8.6 11.2"><use href="#flame"/></svg>
<div class="t" style="font-size:10.30px;line-height:11px;height:11px;top:271px;color:#333;-webkit-text-stroke:0.13px #333;left:428.70px;transform-origin:0 50%;transform:scaleX(0.9539);">https://depositogaitan.com/servicio-raee/</div>
<div class="b" style="left:428.00px;top:288.00px;width:117.70px;height:12.90px;background:#d97706;border-radius:3px;"></div>
<div class="t" style="font-size:10.30px;line-height:11px;height:11px;top:290px;color:#333;-webkit-text-stroke:0.13px #333;right:503.20px;text-align:right;transform-origin:100% 50%;transform:scaleX(0.9000);">974</div>
<svg class="i" style="left:679.30px;top:289.80px" width="11.60" height="9.60" viewBox="0 0 11.6 9.6"><use href="#cam"/></svg>
<svg class="i" style="left:706.00px;top:287.95px" width="8.60" height="11.20" viewBox="0 0 8.6 11.2"><use href="#flame"/></svg>
<div class="t" style="font-size:10.30px;line-height:11px;height:11px;top:319px;color:#333;-webkit-text-stroke:0.13px #333;left:428.70px;transform-origin:0 50%;transform:scaleX(0.9659);">https://depositogaitan.com/</div>
<div class="b" style="left:428.00px;top:336.00px;width:104.00px;height:12.90px;background:#d97706;border-radius:3px;"></div>
<div class="t" style="font-size:10.30px;line-height:11px;height:11px;top:338px;color:#333;-webkit-text-stroke:0.13px #333;right:503.20px;text-align:right;transform-origin:100% 50%;transform:scaleX(0.9000);">854</div>
<svg class="i" style="left:679.30px;top:337.80px" width="11.60" height="9.60" viewBox="0 0 11.6 9.6"><use href="#cam"/></svg>
<svg class="i" style="left:706.00px;top:335.95px" width="8.60" height="11.20" viewBox="0 0 8.6 11.2"><use href="#flame"/></svg>
<div class="t" style="font-size:10.30px;line-height:11px;height:11px;top:367px;color:#333;-webkit-text-stroke:0.13px #333;left:428.70px;transform-origin:0 50%;transform:scaleX(0.9608);">https://depositogaitan.com/compra-de-chatarra-en-bogota/</div>
<div class="b" style="left:428.00px;top:384.00px;width:29.70px;height:12.90px;background:#d97706;border-radius:3px;"></div>
<div class="t" style="font-size:10.30px;line-height:11px;height:11px;top:386px;color:#333;-webkit-text-stroke:0.13px #333;right:503.20px;text-align:right;transform-origin:100% 50%;transform:scaleX(0.9000);">243</div>
<svg class="i" style="left:679.30px;top:385.80px" width="11.60" height="9.60" viewBox="0 0 11.6 9.6"><use href="#cam"/></svg>
<svg class="i" style="left:706.00px;top:383.95px" width="8.60" height="11.20" viewBox="0 0 8.6 11.2"><use href="#flame"/></svg>
<div class="t" style="font-size:10.30px;line-height:11px;height:11px;top:415px;color:#333;-webkit-text-stroke:0.13px #333;left:428.70px;transform-origin:0 50%;transform:scaleX(0.9618);">https://depositogaitan.com/compra-de-chatarra-a-domicilio/</div>
<div class="b" style="left:428.00px;top:432.00px;width:28.80px;height:12.90px;background:#d97706;border-radius:3px;"></div>
<div class="t" style="font-size:10.30px;line-height:11px;height:11px;top:434px;color:#333;-webkit-text-stroke:0.13px #333;right:503.20px;text-align:right;transform-origin:100% 50%;transform:scaleX(0.9000);">233</div>
<svg class="i" style="left:679.30px;top:433.80px" width="11.60" height="9.60" viewBox="0 0 11.6 9.6"><use href="#cam"/></svg>
<svg class="i" style="left:706.00px;top:431.95px" width="8.60" height="11.20" viewBox="0 0 8.6 11.2"><use href="#flame"/></svg>
<div class="t" style="font-size:10.30px;line-height:11px;height:11px;top:463px;color:#333;-webkit-text-stroke:0.13px #333;left:428.70px;transform-origin:0 50%;transform:scaleX(0.9588);">https://depositogaitan.com/compra-de-chatarra/</div>
<div class="b" style="left:428.00px;top:480.00px;width:27.80px;height:12.90px;background:#d97706;border-radius:3px;"></div>
<div class="t" style="font-size:10.30px;line-height:11px;height:11px;top:482px;color:#333;-webkit-text-stroke:0.13px #333;right:503.20px;text-align:right;transform-origin:100% 50%;transform:scaleX(0.9000);">230</div>
<svg class="i" style="left:679.30px;top:481.80px" width="11.60" height="9.60" viewBox="0 0 11.6 9.6"><use href="#cam"/></svg>
<svg class="i" style="left:706.00px;top:479.95px" width="8.60" height="11.20" viewBox="0 0 8.6 11.2"><use href="#flame"/></svg>
<div class="t" style="font-size:10.30px;line-height:11px;height:11px;top:511px;color:#333;-webkit-text-stroke:0.13px #333;left:428.70px;transform-origin:0 50%;transform:scaleX(0.9606);">https://depositogaitan.com/nuestra-historia/</div>
<div class="b" style="left:750.40px;top:214.00px;width:5.50px;height:154.60px;background:#b9b7b2;border-radius:3px;"></div>
<div class="t" style="font-size:10.30px;line-height:11px;height:11px;top:183px;color:#333;-webkit-text-stroke:0.13px #333;left:802.00px;transform-origin:0 50%;transform:scaleX(0.8713);">PaidSearch</div>
<div class="b" style="left:802.00px;top:200.20px;width:209.00px;height:12.60px;background:#03a27e;border-radius:3px;"></div>
<div class="t" style="font-size:10.30px;line-height:11px;height:11px;top:202px;color:#333;-webkit-text-stroke:0.13px #333;right:121.80px;text-align:right;transform-origin:100% 50%;transform:scaleX(0.9000);">3554</div>
<svg class="i" style="left:1061.30px;top:201.85px" width="11.60" height="9.60" viewBox="0 0 11.6 9.6"><use href="#cam"/></svg>
<svg class="i" style="left:1088.10px;top:200.00px" width="8.60" height="11.20" viewBox="0 0 8.6 11.2"><use href="#flame"/></svg>
<div class="t" style="font-size:10.30px;line-height:11px;height:11px;top:231px;color:#333;-webkit-text-stroke:0.13px #333;left:802.00px;transform-origin:0 50%;transform:scaleX(0.8966);">OrganicSearch</div>
<div class="b" style="left:802.00px;top:248.20px;width:83.00px;height:12.60px;background:#03a27e;border-radius:3px;"></div>
<div class="t" style="font-size:10.30px;line-height:11px;height:11px;top:250px;color:#333;-webkit-text-stroke:0.13px #333;right:121.80px;text-align:right;transform-origin:100% 50%;transform:scaleX(0.9000);">1406</div>
<svg class="i" style="left:1061.30px;top:249.85px" width="11.60" height="9.60" viewBox="0 0 11.6 9.6"><use href="#cam"/></svg>
<svg class="i" style="left:1088.10px;top:248.00px" width="8.60" height="11.20" viewBox="0 0 8.6 11.2"><use href="#flame"/></svg>
<div class="t" style="font-size:10.30px;line-height:11px;height:11px;top:279px;color:#333;-webkit-text-stroke:0.13px #333;left:802.00px;transform-origin:0 50%;transform:scaleX(0.9295);">Direct</div>
<div class="b" style="left:802.00px;top:296.20px;width:50.80px;height:12.60px;background:#03a27e;border-radius:3px;"></div>
<div class="t" style="font-size:10.30px;line-height:11px;height:11px;top:298px;color:#333;-webkit-text-stroke:0.13px #333;right:121.80px;text-align:right;transform-origin:100% 50%;transform:scaleX(0.9000);">848</div>
<svg class="i" style="left:1061.30px;top:297.85px" width="11.60" height="9.60" viewBox="0 0 11.6 9.6"><use href="#cam"/></svg>
<svg class="i" style="left:1088.10px;top:296.00px" width="8.60" height="11.20" viewBox="0 0 8.6 11.2"><use href="#flame"/></svg>
<div class="t" style="font-size:10.30px;line-height:11px;height:11px;top:327px;color:#333;-webkit-text-stroke:0.13px #333;left:802.00px;transform-origin:0 50%;transform:scaleX(0.9472);">Other</div>
<div class="b" style="left:802.00px;top:344.20px;width:3.80px;height:12.60px;background:#03a27e;border-radius:2px;"></div>
<div class="t" style="font-size:10.30px;line-height:11px;height:11px;top:346px;color:#333;-webkit-text-stroke:0.13px #333;right:121.80px;text-align:right;transform-origin:100% 50%;transform:scaleX(0.9000);">58</div>
<svg class="i" style="left:1061.30px;top:345.85px" width="11.60" height="9.60" viewBox="0 0 11.6 9.6"><use href="#cam"/></svg>
<svg class="i" style="left:1088.10px;top:344.00px" width="8.60" height="11.20" viewBox="0 0 8.6 11.2"><use href="#flame"/></svg>
<div class="t" style="font-size:10.30px;line-height:11px;height:11px;top:375px;color:#333;-webkit-text-stroke:0.13px #333;left:802.00px;transform-origin:0 50%;transform:scaleX(0.8789);">Referral</div>
<div class="b" style="left:802.00px;top:392.20px;width:2.00px;height:12.60px;background:#03a27e;border-radius:0;"></div>
<div class="t" style="font-size:10.30px;line-height:11px;height:11px;top:394px;color:#333;-webkit-text-stroke:0.13px #333;right:121.80px;text-align:right;transform-origin:100% 50%;transform:scaleX(0.9000);">34</div>
<svg class="i" style="left:1061.30px;top:393.85px" width="11.60" height="9.60" viewBox="0 0 11.6 9.6"><use href="#cam"/></svg>
<svg class="i" style="left:1088.10px;top:392.00px" width="8.60" height="11.20" viewBox="0 0 8.6 11.2"><use href="#flame"/></svg>
<div class="t" style="font-size:10.30px;line-height:11px;height:11px;top:423px;color:#333;-webkit-text-stroke:0.13px #333;left:802.00px;transform-origin:0 50%;transform:scaleX(0.9297);">AIPlatform</div>
<div class="b" style="left:802.00px;top:440.20px;width:1.00px;height:12.60px;background:#03a27e;border-radius:0;"></div>
<div class="t" style="font-size:10.30px;line-height:11px;height:11px;top:442px;color:#333;-webkit-text-stroke:0.13px #333;right:121.80px;text-align:right;transform-origin:100% 50%;transform:scaleX(0.9000);">8</div>
<svg class="i" style="left:1061.30px;top:441.85px" width="11.60" height="9.60" viewBox="0 0 11.6 9.6"><use href="#cam"/></svg>
<svg class="i" style="left:1088.10px;top:440.00px" width="8.60" height="11.20" viewBox="0 0 8.6 11.2"><use href="#flame"/></svg>
<div class="t" style="font-size:10.30px;line-height:11px;height:11px;top:471px;color:#333;-webkit-text-stroke:0.13px #333;left:802.00px;transform-origin:0 50%;transform:scaleX(0.8697);">Social</div>
<div class="b" style="left:802.00px;top:488.20px;width:1.00px;height:12.60px;background:#03a27e;border-radius:0;"></div>
<div class="t" style="font-size:10.30px;line-height:11px;height:11px;top:490px;color:#333;-webkit-text-stroke:0.13px #333;right:121.80px;text-align:right;transform-origin:100% 50%;transform:scaleX(0.9000);">7</div>
<svg class="i" style="left:1061.30px;top:489.85px" width="11.60" height="9.60" viewBox="0 0 11.6 9.6"><use href="#cam"/></svg>
<svg class="i" style="left:1088.10px;top:488.00px" width="8.60" height="11.20" viewBox="0 0 8.6 11.2"><use href="#flame"/></svg>
<div class="t" style="font-size:10.30px;line-height:11px;height:11px;top:584px;color:#1f1f1f;-webkit-text-stroke:0.30px #1f1f1f;left:55.00px;transform-origin:0 50%;transform:scaleX(0.9384);">Clics continuos</div>
<svg class="i" style="left:126.20px;top:583.60px" width="9.60" height="9.60" viewBox="0 0 9.6 9.6"><use href="#info"/></svg>
<div class="b" style="left:55.20px;top:601.00px;width:302.40px;height:56.00px;border:1px solid #e9f1fc;box-sizing:border-box;border-radius:7px;"></div>
<div class="b" style="left:73.10px;top:613.40px;width:31.10px;height:31.20px;background:#e8e8ff;border-radius:50%;"></div>
<svg class="i" style="left:80.90px;top:621.10px" width="16.00" height="16.00" viewBox="0 0 16 16"><use href="#angry"/></svg>
<div class="t" style="font-size:23.40px;line-height:26px;height:26px;top:611px;color:#0b4177;-webkit-text-stroke:0.35px #0b4177;left:117.90px;transform-origin:0 50%;transform:scaleX(0.9028);">0,05%</div>
<div class="t" style="font-size:9.40px;line-height:11px;height:11px;top:638px;color:#555;font-style:italic;left:117.70px;transform-origin:0 50%;transform:scaleX(0.9101);">3 sesiones</div>
<svg class="i" style="left:321.00px;top:624.10px" width="11.60" height="9.60" viewBox="0 0 11.6 9.6"><use href="#cam"/></svg>
<div class="t" style="font-size:10.30px;line-height:11px;height:11px;top:679px;color:#1f1f1f;-webkit-text-stroke:0.30px #1f1f1f;left:55.00px;transform-origin:0 50%;transform:scaleX(0.9364);">Clics fallidos</div>
<svg class="i" style="left:114.80px;top:678.20px" width="9.60" height="9.60" viewBox="0 0 9.6 9.6"><use href="#info"/></svg>
<div class="b" style="left:55.20px;top:696.00px;width:302.40px;height:56.00px;border:1px solid #e9f1fc;box-sizing:border-box;border-radius:7px;"></div>
<div class="b" style="left:73.10px;top:708.40px;width:31.10px;height:31.20px;background:#e8e8ff;border-radius:50%;"></div>
<svg class="i" style="left:80.90px;top:716.10px" width="16.00" height="16.00" viewBox="0 0 16 16"><use href="#dead"/></svg>
<div class="t" style="font-size:23.40px;line-height:26px;height:26px;top:705px;color:#0b4177;-webkit-text-stroke:0.35px #0b4177;left:117.90px;transform-origin:0 50%;transform:scaleX(0.9058);">7,64%</div>
<div class="t" style="font-size:9.40px;line-height:11px;height:11px;top:733px;color:#555;font-style:italic;left:117.70px;transform-origin:0 50%;transform:scaleX(0.9333);">420 sesiones</div>
<svg class="i" style="left:321.00px;top:719.10px" width="11.60" height="9.60" viewBox="0 0 11.6 9.6"><use href="#cam"/></svg>
<div class="t" style="font-size:10.30px;line-height:11px;height:11px;top:773px;color:#1f1f1f;-webkit-text-stroke:0.30px #1f1f1f;left:55.00px;transform-origin:0 50%;transform:scaleX(0.9316);">Desplazamiento excesivo</div>
<svg class="i" style="left:170.00px;top:772.80px" width="9.60" height="9.60" viewBox="0 0 9.6 9.6"><use href="#info"/></svg>
<div class="b" style="left:55.20px;top:791.00px;width:302.40px;height:56.00px;border:1px solid #e9f1fc;box-sizing:border-box;border-radius:7px;"></div>
<div class="b" style="left:73.10px;top:802.30px;width:31.10px;height:31.20px;background:#e8e8ff;border-radius:50%;"></div>
<svg class="i" style="left:80.90px;top:810.00px" width="16.00" height="16.00" viewBox="0 0 16 16"><use href="#scroll"/></svg>
<div class="t" style="font-size:23.40px;line-height:26px;height:26px;top:800px;color:#0b4177;-webkit-text-stroke:0.35px #0b4177;left:117.90px;transform-origin:0 50%;transform:scaleX(0.8752);">0%</div>
<div class="t" style="font-size:9.40px;line-height:11px;height:11px;top:827px;color:#555;font-style:italic;left:117.70px;transform-origin:0 50%;transform:scaleX(0.9101);">0 sesiones</div>
<div class="t" style="font-size:10.30px;line-height:11px;height:11px;top:867px;color:#1f1f1f;-webkit-text-stroke:0.30px #1f1f1f;left:55.00px;transform-origin:0 50%;transform:scaleX(0.9241);">Retrocesos rápidos</div>
<svg class="i" style="left:143.20px;top:866.80px" width="9.60" height="9.60" viewBox="0 0 9.6 9.6"><use href="#info"/></svg>
<div class="b" style="left:55.20px;top:886.00px;width:302.40px;height:56.00px;border:1px solid #e9f1fc;box-sizing:border-box;border-radius:7px;"></div>
<div class="b" style="left:73.10px;top:897.30px;width:31.10px;height:31.20px;background:#e8e8ff;border-radius:50%;"></div>
<svg class="i" style="left:80.90px;top:905.00px" width="16.00" height="16.00" viewBox="0 0 16 16"><use href="#back"/></svg>
<div class="t" style="font-size:23.40px;line-height:26px;height:26px;top:895px;color:#0b4177;-webkit-text-stroke:0.35px #0b4177;left:117.90px;transform-origin:0 50%;transform:scaleX(0.9028);">2,80%</div>
<div class="t" style="font-size:9.40px;line-height:11px;height:11px;top:922px;color:#555;font-style:italic;left:117.70px;transform-origin:0 50%;transform:scaleX(0.9315);">154 sesiones</div>
<svg class="i" style="left:321.00px;top:908.00px" width="11.60" height="9.60" viewBox="0 0 11.6 9.6"><use href="#cam"/></svg>
<div class="t" style="font-size:10.30px;line-height:11px;height:11px;top:588px;color:#333;-webkit-text-stroke:0.13px #333;left:428.70px;transform-origin:0 50%;transform:scaleX(0.9185);">Mostrar porcentaje de sesiones</div>
<div class="b" style="left:570.10px;top:585.30px;width:32.00px;height:15.70px;border:1px solid #4a4a4a;box-sizing:border-box;border-radius:8px;background:#fff;"></div>
<div class="b" style="left:573.40px;top:588.20px;width:9.80px;height:9.80px;background:#606060;border-radius:50%;"></div>
<div class="t" style="font-size:10.30px;line-height:11px;height:11px;top:588px;color:#333;-webkit-text-stroke:0.13px #333;left:609.00px;transform-origin:0 50%;transform:scaleX(0.8998);">Desactivado</div>
<div class="b" style="left:428.00px;top:615.45px;width:23.00px;height:22.80px;background:#e8e8ff;border-radius:50%;"></div>
<svg class="i" style="left:433.70px;top:620.85px" width="12.00" height="12.00" viewBox="0 0 12 12"><use href="#evcal"/></svg>
<div class="t" style="font-size:10.30px;line-height:11px;height:11px;top:623px;color:#333;-webkit-text-stroke:0.13px #333;left:457.50px;transform-origin:0 50%;transform:scaleX(0.8946);">Clic de salida</div>
<div class="t" style="font-size:10.30px;line-height:11px;height:11px;top:623px;color:#333;-webkit-text-stroke:0.13px #333;left:614.00px;transform-origin:0 50%;transform:scaleX(0.8764);">378 sesiones</div>
<svg class="i" style="left:681.30px;top:620.95px" width="11.60" height="9.60" viewBox="0 0 11.6 9.6"><use href="#cam"/></svg>
<svg class="i" style="left:714.00px;top:619.95px" width="8.60" height="11.20" viewBox="0 0 8.6 11.2"><use href="#flame"/></svg>
<div class="b" style="left:422.00px;top:651.00px;width:316.00px;height:1.00px;background:#e6e6e6;"></div>
<div class="b" style="left:428.00px;top:664.20px;width:23.00px;height:22.80px;background:#e8e8ff;border-radius:50%;"></div>
<svg class="i" style="left:433.70px;top:669.60px" width="12.00" height="12.00" viewBox="0 0 12 12"><use href="#evcard"/></svg>
<div class="t" style="font-size:10.30px;line-height:11px;height:11px;top:672px;color:#333;-webkit-text-stroke:0.13px #333;left:457.50px;transform-origin:0 50%;transform:scaleX(0.9186);">Póngase en contacto con nosotros</div>
<div class="t" style="font-size:10.30px;line-height:11px;height:11px;top:672px;color:#333;-webkit-text-stroke:0.13px #333;left:614.00px;transform-origin:0 50%;transform:scaleX(0.8786);">31 sesiones</div>
<svg class="i" style="left:681.30px;top:669.70px" width="11.60" height="9.60" viewBox="0 0 11.6 9.6"><use href="#cam"/></svg>
<svg class="i" style="left:714.00px;top:668.70px" width="8.60" height="11.20" viewBox="0 0 8.6 11.2"><use href="#flame"/></svg>
<div class="b" style="left:422.00px;top:699.70px;width:316.00px;height:1.00px;background:#e6e6e6;"></div>
<div class="b" style="left:428.00px;top:712.95px;width:23.00px;height:22.80px;background:#e8e8ff;border-radius:50%;"></div>
<svg class="i" style="left:433.70px;top:718.35px" width="12.00" height="12.00" viewBox="0 0 12 12"><use href="#evform"/></svg>
<div class="t" style="font-size:10.30px;line-height:11px;height:11px;top:721px;color:#333;-webkit-text-stroke:0.13px #333;left:457.50px;transform-origin:0 50%;transform:scaleX(0.9223);">Enviar formulario</div>
<div class="t" style="font-size:10.30px;line-height:11px;height:11px;top:721px;color:#333;-webkit-text-stroke:0.13px #333;left:614.00px;transform-origin:0 50%;transform:scaleX(0.8786);">24 sesiones</div>
<svg class="i" style="left:681.30px;top:718.45px" width="11.60" height="9.60" viewBox="0 0 11.6 9.6"><use href="#cam"/></svg>
<svg class="i" style="left:714.00px;top:717.45px" width="8.60" height="11.20" viewBox="0 0 8.6 11.2"><use href="#flame"/></svg>
<div class="b" style="left:422.00px;top:748.40px;width:316.00px;height:1.00px;background:#e6e6e6;"></div>
<div class="b" style="left:428.00px;top:761.70px;width:23.00px;height:22.80px;background:#e8e8ff;border-radius:50%;"></div>
<svg class="i" style="left:433.70px;top:767.10px" width="12.00" height="12.00" viewBox="0 0 12 12"><use href="#evcal"/></svg>
<div class="t" style="font-size:10.30px;line-height:11px;height:11px;top:769px;color:#333;-webkit-text-stroke:0.13px #333;left:457.50px;transform-origin:0 50%;transform:scaleX(0.9298);">Depósito</div>
<div class="t" style="font-size:10.30px;line-height:11px;height:11px;top:769px;color:#333;-webkit-text-stroke:0.13px #333;left:614.00px;transform-origin:0 50%;transform:scaleX(0.8753);">3 sesiones</div>
<svg class="i" style="left:681.30px;top:767.20px" width="11.60" height="9.60" viewBox="0 0 11.6 9.6"><use href="#cam"/></svg>
<svg class="i" style="left:714.00px;top:766.20px" width="8.60" height="11.20" viewBox="0 0 8.6 11.2"><use href="#flame"/></svg>
<div class="b" style="left:422.00px;top:797.10px;width:316.00px;height:1.00px;background:#e6e6e6;"></div>
<div class="b" style="left:428.00px;top:810.45px;width:23.00px;height:22.80px;background:#e8e8ff;border-radius:50%;"></div>
<svg class="i" style="left:433.70px;top:815.85px" width="12.00" height="12.00" viewBox="0 0 12 12"><use href="#evcal"/></svg>
<div class="t" style="font-size:10.30px;line-height:11px;height:11px;top:818px;color:#333;-webkit-text-stroke:0.13px #333;left:457.50px;transform-origin:0 50%;transform:scaleX(0.9218);">Pedido correcto</div>
<div class="t" style="font-size:10.30px;line-height:11px;height:11px;top:818px;color:#333;-webkit-text-stroke:0.13px #333;left:614.00px;transform-origin:0 50%;transform:scaleX(0.8753);">2 sesiones</div>
<svg class="i" style="left:681.30px;top:815.95px" width="11.60" height="9.60" viewBox="0 0 11.6 9.6"><use href="#cam"/></svg>
<svg class="i" style="left:714.00px;top:814.95px" width="8.60" height="11.20" viewBox="0 0 8.6 11.2"><use href="#flame"/></svg>
<svg class="i" style="left:0;top:0" width="1163" height="944" viewBox="0 0 1163 944"><path d="M957.70,618.01 A55.10,55.10 0 0 1 958.99,727.89 Q956.80,728.04 956.69,725.84 L956.53,713.63 Q956.41,711.44 958.60,711.25 A38.50,38.50 0 0 0 957.70,634.66 Q955.50,634.52 955.57,632.32 L955.45,620.11 Q955.50,617.92 957.70,618.01 Z" fill="#ee35ff"/><path d="M952.00,728.06 A55.10,55.10 0 0 1 905.73,646.79 Q906.82,644.87 908.71,646.00 L918.99,652.58 Q920.90,653.69 919.85,655.62 A38.50,38.50 0 0 0 951.61,711.41 Q953.81,711.50 953.78,713.70 L954.20,725.90 Q954.20,728.10 952.00,728.06 Z" fill="#8684ff"/><path d="M909.45,640.86 A55.10,55.10 0 0 1 926.03,625.64 Q927.94,624.56 928.99,626.49 L934.44,637.42 Q935.51,639.34 933.62,640.46 A38.50,38.50 0 0 0 923.56,649.69 Q922.27,651.48 920.45,650.25 L910.04,643.88 Q908.20,642.67 909.45,640.86 Z" fill="#d97706"/><path d="M931.62,623.95 A54.00,54.00 0 0 1 934.76,622.62 L939.38,636.28 A39.60,39.60 0 0 0 938.19,636.78 Z" fill="#0a74d9" stroke="#0a74d9" stroke-width="2.2" stroke-linejoin="round"/><path d="M939.02,621.18 A54.00,54.00 0 0 1 941.65,620.48 L944.41,634.63 A39.60,39.60 0 0 0 943.64,634.83 Z" fill="#03a27e" stroke="#03a27e" stroke-width="2.2" stroke-linejoin="round"/><path d="M946.07,619.62 A54.00,54.00 0 0 1 951.95,619.05 L951.95,633.46 A39.60,39.60 0 0 0 948.83,633.77 Z" fill="#b45cff" stroke="#b45cff" stroke-width="2.2" stroke-linejoin="round"/></svg>
<div class="b" style="left:801.80px;top:759.30px;width:10.00px;height:10.00px;background:#ee35ff;border-radius:50%;"></div>
<div class="t" style="font-size:10.30px;line-height:11px;height:11px;top:761px;color:#333;-webkit-text-stroke:0.13px #333;left:818.00px;transform-origin:0 50%;transform:scaleX(0.9376);">ChromeMobile</div>
<div class="t" style="font-size:10.30px;line-height:11px;height:11px;top:761px;color:#333;-webkit-text-stroke:0.13px #333;left:945.40px;transform-origin:0 50%;transform:scaleX(0.8616);">49,63%</div>
<div class="t" style="font-size:10.30px;line-height:11px;height:11px;top:761px;color:#333;-webkit-text-stroke:0.13px #333;left:982.60px;transform-origin:0 50%;transform:scaleX(0.8791);">2729 sesiones</div>
<svg class="i" style="left:1054.30px;top:758.90px" width="11.60" height="9.60" viewBox="0 0 11.6 9.6"><use href="#cam"/></svg>
<svg class="i" style="left:1088.10px;top:756.95px" width="8.60" height="11.20" viewBox="0 0 8.6 11.2"><use href="#flame"/></svg>
<div class="b" style="left:801.80px;top:791.30px;width:10.00px;height:10.00px;background:#8684ff;border-radius:50%;"></div>
<div class="t" style="font-size:10.30px;line-height:11px;height:11px;top:793px;color:#333;-webkit-text-stroke:0.13px #333;left:818.00px;transform-origin:0 50%;transform:scaleX(0.9117);">Chrome</div>
<div class="t" style="font-size:10.30px;line-height:11px;height:11px;top:793px;color:#333;-webkit-text-stroke:0.13px #333;left:945.40px;transform-origin:0 50%;transform:scaleX(0.8616);">34,28%</div>
<div class="t" style="font-size:10.30px;line-height:11px;height:11px;top:793px;color:#333;-webkit-text-stroke:0.13px #333;left:982.60px;transform-origin:0 50%;transform:scaleX(0.8791);">1885 sesiones</div>
<svg class="i" style="left:1054.30px;top:790.90px" width="11.60" height="9.60" viewBox="0 0 11.6 9.6"><use href="#cam"/></svg>
<svg class="i" style="left:1088.10px;top:788.95px" width="8.60" height="11.20" viewBox="0 0 8.6 11.2"><use href="#flame"/></svg>
<div class="b" style="left:801.80px;top:823.30px;width:10.00px;height:10.00px;background:#d97706;border-radius:50%;"></div>
<div class="t" style="font-size:10.30px;line-height:11px;height:11px;top:825px;color:#333;-webkit-text-stroke:0.13px #333;left:818.00px;transform-origin:0 50%;transform:scaleX(0.9257);">MobileSafari</div>
<div class="t" style="font-size:10.30px;line-height:11px;height:11px;top:825px;color:#333;-webkit-text-stroke:0.13px #333;left:945.40px;transform-origin:0 50%;transform:scaleX(0.8663);">8,57%</div>
<div class="t" style="font-size:10.30px;line-height:11px;height:11px;top:825px;color:#333;-webkit-text-stroke:0.13px #333;left:982.60px;transform-origin:0 50%;transform:scaleX(0.8797);">471 sesiones</div>
<svg class="i" style="left:1054.30px;top:822.90px" width="11.60" height="9.60" viewBox="0 0 11.6 9.6"><use href="#cam"/></svg>
<svg class="i" style="left:1088.10px;top:820.95px" width="8.60" height="11.20" viewBox="0 0 8.6 11.2"><use href="#flame"/></svg>
<div class="b" style="left:801.80px;top:855.30px;width:10.00px;height:10.00px;background:#0a74d9;border-radius:50%;"></div>
<div class="t" style="font-size:10.30px;line-height:11px;height:11px;top:857px;color:#333;-webkit-text-stroke:0.13px #333;left:818.00px;transform-origin:0 50%;transform:scaleX(0.8688);">Edge</div>
<div class="t" style="font-size:10.30px;line-height:11px;height:11px;top:857px;color:#333;-webkit-text-stroke:0.13px #333;left:945.40px;transform-origin:0 50%;transform:scaleX(0.8663);">2,33%</div>
<div class="t" style="font-size:10.30px;line-height:11px;height:11px;top:857px;color:#333;-webkit-text-stroke:0.13px #333;left:982.60px;transform-origin:0 50%;transform:scaleX(0.8797);">128 sesiones</div>
<svg class="i" style="left:1054.30px;top:854.90px" width="11.60" height="9.60" viewBox="0 0 11.6 9.6"><use href="#cam"/></svg>
<svg class="i" style="left:1088.10px;top:852.95px" width="8.60" height="11.20" viewBox="0 0 8.6 11.2"><use href="#flame"/></svg>
<div class="b" style="left:801.80px;top:887.30px;width:10.00px;height:10.00px;background:#03a27e;border-radius:50%;"></div>
<div class="t" style="font-size:10.30px;line-height:11px;height:11px;top:889px;color:#333;-webkit-text-stroke:0.13px #333;left:818.00px;transform-origin:0 50%;transform:scaleX(0.9371);">GoogleApp</div>
<div class="t" style="font-size:10.30px;line-height:11px;height:11px;top:889px;color:#333;-webkit-text-stroke:0.13px #333;left:945.40px;transform-origin:0 50%;transform:scaleX(0.8663);">2,13%</div>
<div class="t" style="font-size:10.30px;line-height:11px;height:11px;top:889px;color:#333;-webkit-text-stroke:0.13px #333;left:982.60px;transform-origin:0 50%;transform:scaleX(0.8910);">117 sesiones</div>
<svg class="i" style="left:1054.30px;top:886.90px" width="11.60" height="9.60" viewBox="0 0 11.6 9.6"><use href="#cam"/></svg>
<svg class="i" style="left:1088.10px;top:884.95px" width="8.60" height="11.20" viewBox="0 0 8.6 11.2"><use href="#flame"/></svg>
<div class="b" style="left:801.80px;top:919.30px;width:10.00px;height:10.00px;background:#b45cff;border-radius:50%;"></div>
<div class="t" style="font-size:10.30px;line-height:11px;height:11px;top:921px;color:#333;-webkit-text-stroke:0.13px #333;left:818.00px;transform-origin:0 50%;transform:scaleX(0.9433);">Other</div>
<div class="t" style="font-size:10.30px;line-height:11px;height:11px;top:921px;color:#333;-webkit-text-stroke:0.13px #333;left:945.40px;transform-origin:0 50%;transform:scaleX(0.8663);">3,07%</div>
<div class="t" style="font-size:10.30px;line-height:11px;height:11px;top:921px;color:#333;-webkit-text-stroke:0.13px #333;left:982.60px;transform-origin:0 50%;transform:scaleX(0.8797);">169 sesiones</div>
<svg class="i" style="left:849.00px;top:922.60px" width="8.40" height="5.00" viewBox="0 0 8.4 5"><use href="#chevd"/></svg>
</div></body></html>
